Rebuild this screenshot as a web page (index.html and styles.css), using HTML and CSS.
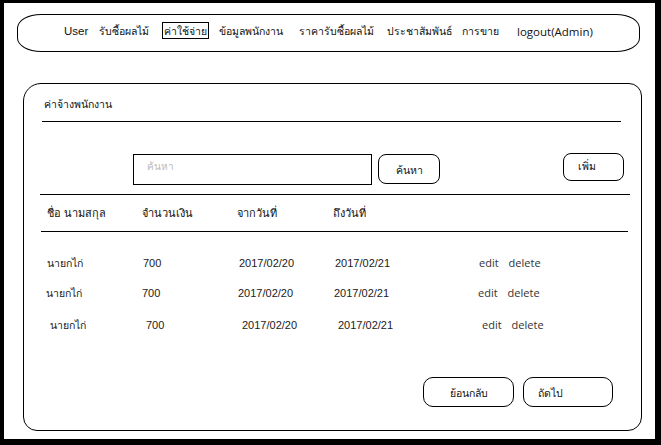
FILE: index.html
```html
<!DOCTYPE html>
<html lang="th">
<head>
<meta charset="utf-8">
<title>ค่าจ้างพนักงาน</title>
<link rel="stylesheet" href="styles.css">
</head>
<body>
<div class="frame">
  <nav class="nav">
    <span class="nav-item latin">User</span>
    <span class="nav-item">รับซื้อผลไม้</span>
    <span class="nav-item"><span class="boxed">ค่าใช้จ่าย</span></span>
    <span class="nav-item">ข้อมูลพนักงาน</span>
    <span class="nav-item">ราคารับซื้อผลไม้</span>
    <span class="nav-item">ประชาสัมพันธ์</span>
    <span class="nav-item">การขาย</span>
    <span class="nav-item logout">logout(Admin)</span>
  </nav>

  <section class="card">
    <div class="title">ค่าจ้างพนักงาน</div>
    <div class="rule rule-1"></div>

    <div class="search-row">
      <div class="search-box"><span class="placeholder">ค้นหา</span></div>
      <div class="btn btn-search">ค้นหา</div>
      <div class="btn btn-add">เพิ่ม</div>
    </div>

    <div class="rule rule-2"></div>

    <div class="grid head">
      <span>ชื่อ นามสกุล</span>
      <span>จำนวนเงิน</span>
      <span>จากวันที่</span>
      <span>ถึงวันที่</span>
    </div>

    <div class="rule rule-3"></div>

    <div class="grid row row-1">
      <span class="name">นายกไก่</span>
      <span>700</span>
      <span>2017/02/20</span>
      <span>2017/02/21</span>
      <span class="actions"><span>edit</span><span>delete</span></span>
    </div>
    <div class="grid row row-2">
      <span class="name">นายกไก่</span>
      <span>700</span>
      <span>2017/02/20</span>
      <span>2017/02/21</span>
      <span class="actions"><span>edit</span><span>delete</span></span>
    </div>
    <div class="grid row row-3">
      <span class="name">นายกไก่</span>
      <span>700</span>
      <span>2017/02/20</span>
      <span>2017/02/21</span>
      <span class="actions"><span>edit</span><span>delete</span></span>
    </div>

    <div class="pager">
      <div class="btn btn-back">ย้อนกลับ</div>
      <div class="btn btn-next">ถัดไป</div>
    </div>
  </section>
</div>
</body>
</html>
```

FILE: styles.css
```css
* { box-sizing: border-box; }

html, body {
  margin: 0;
  padding: 0;
  background: #ffffff;
}

body {
  font-family: Tahoma, "DejaVu Sans", "Liberation Sans", sans-serif;
  font-size: 10.5px;
  color: #111;
}

.frame {
  width: 661px;
  height: 445px;
  border-style: solid;
  border-color: #000;
  border-width: 3px 6px 6px 4px;
  display: flex;
  flex-direction: column;
  align-items: flex-start;
  overflow: hidden;
}

/* ---------- navigation oval ---------- */
.nav {
  margin: 11px 0 0 13px;
  width: 623px;
  height: 38px;
  border: 1px solid #000;
  border-radius: 24px / 14px;
  display: grid;
  grid-template-columns: 35px 64px 56px 80px 88px 75px 55px auto;
  align-items: center;
  padding: 0 0 4px 46px;
  font-size: 10.5px;
  color: #111;
  white-space: nowrap;
}

.latin {
  font-family: "Liberation Sans", sans-serif;
  font-size: 11.5px;
}

.boxed {
  border: 1px solid #000;
  padding: 2px 1px 1px 1px;
  margin-left: -1px;
}

.logout {
  font-family: "Open Sans", "Liberation Sans", sans-serif;
  font-size: 11.5px;
}

/* ---------- main card ---------- */
.card {
  margin: 31px 0 0 19px;
  width: 619px;
  height: 348px;
  border: 1px solid #000;
  border-radius: 18px 13px 14px 14px;
  display: flex;
  flex-direction: column;
  align-items: flex-start;
}

.title {
  margin: 12px 0 0 20px;
  line-height: 16px;
}

.rule {
  height: 1px;
  background: #000;
}

.rule-1 { margin: 9px 0 0 18px; width: 579px; }
.rule-2 { margin: 9px 0 0 16px; width: 590px; }
.rule-3 { margin: 9px 0 0 17px; width: 587px; }

/* ---------- search row ---------- */
.search-row {
  margin: 32px 0 0 109px;
  display: flex;
  align-items: flex-start;
}

.search-box {
  width: 239px;
  height: 31px;
  border: 1px solid #000;
  padding: 3px 0 0 13px;
  line-height: 16px;
}

.placeholder {
  color: #b8b8b8;
  font-size: 10px;
}

.btn {
  border: 1px solid #000;
  border-radius: 8px;
  display: flex;
  justify-content: center;
  align-items: center;
  color: #111;
}

.btn-search {
  margin-left: 6px;
  width: 62px;
  height: 30px;
  padding-top: 2px;
}

.btn-add {
  margin: -1px 0 0 123px;
  width: 61px;
  height: 28px;
  align-items: flex-start;
  padding: 4px 13px 0 0;
}

/* ---------- table ---------- */
.grid {
  display: grid;
  grid-template-columns: 96px 96px 96px 144px auto;
  line-height: 16px;
  white-space: nowrap;
}

.head {
  margin: 11px 0 0 23px;
  grid-template-columns: 95px 95px 96px auto;
  font-size: 11px;
}

.row {
  font-family: "Liberation Sans", Arial, sans-serif;
  font-size: 11px;
  color: #1a1a1a;
}

.row .name {
  font-family: Tahoma, "DejaVu Sans", "Liberation Sans", sans-serif;
  font-size: 10.5px;
}

.row .actions {
  display: flex;
  gap: 10px;
  font-family: "Open Sans", "Liberation Sans", sans-serif;
  font-size: 11px;
  color: #333;
}

.row-1 { margin: 23px 0 0 23px; }
.row-2 { margin: 14px 0 0 22px; }
.row-3 { margin: 16px 0 0 26px; }

/* ---------- pager ---------- */
.pager {
  margin: 44px 0 0 399px;
  display: flex;
  gap: 9px;
}

.btn-back {
  width: 91px;
  height: 30px;
  border-radius: 10px;
  padding-top: 2px;
}

.btn-next {
  width: 90px;
  height: 30px;
  border-radius: 10px;
  justify-content: flex-start;
  padding: 2px 0 0 14px;
}
```
